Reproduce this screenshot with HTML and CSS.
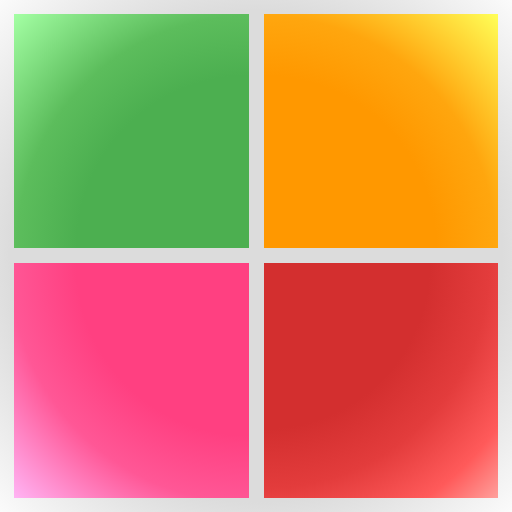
FILE: index.html
```html
<!DOCTYPE html>
<html lang="en">
<head>
  <meta charset="UTF-8">
  <meta name="viewport" content="width=device-width, initial-scale=1.0">
  <title>Tiles</title>
  <link rel="stylesheet" href="styles.css">
</head>
<body>
  <div class="board">
    <div class="tile green"></div>
    <div class="tile orange"></div>
    <div class="tile pink"></div>
    <div class="tile red"></div>
  </div>
</body>
</html>
```

FILE: styles.css
```css
html, body {
  margin: 0;
  padding: 0;
}
body {
  width: 512px;
  height: 512px;
  background: radial-gradient(circle at center, #dcdcdc 0%, #dcdcdc 68%, #fbfbfb 100%);
}
.board {
  box-sizing: border-box;
  width: 512px;
  height: 512px;
  padding: 14px;
  display: grid;
  grid-template-columns: 235px 234px;
  grid-template-rows: 234px 235px;
  gap: 15px;
}
/* light corner is the far end of a gradient centred on the opposite corner */
.green {
  background: radial-gradient(circle at bottom right, #4caf50 52%, #5cbd5c 70%, #a4ffa4 100%);
}
.orange {
  background: radial-gradient(circle at bottom left, #ff9800 52%, #ffa60e 70%, #ffff58 100%);
}
.pink {
  background: radial-gradient(circle at top right, #ff4081 52%, #ff5796 72%, #ffb4f4 100%);
}
.red {
  background: radial-gradient(circle at top left, #d32f2f 50%, #e33c3c 68%, #ff5a5a 86%, #ffa09c 100%);
}
```
